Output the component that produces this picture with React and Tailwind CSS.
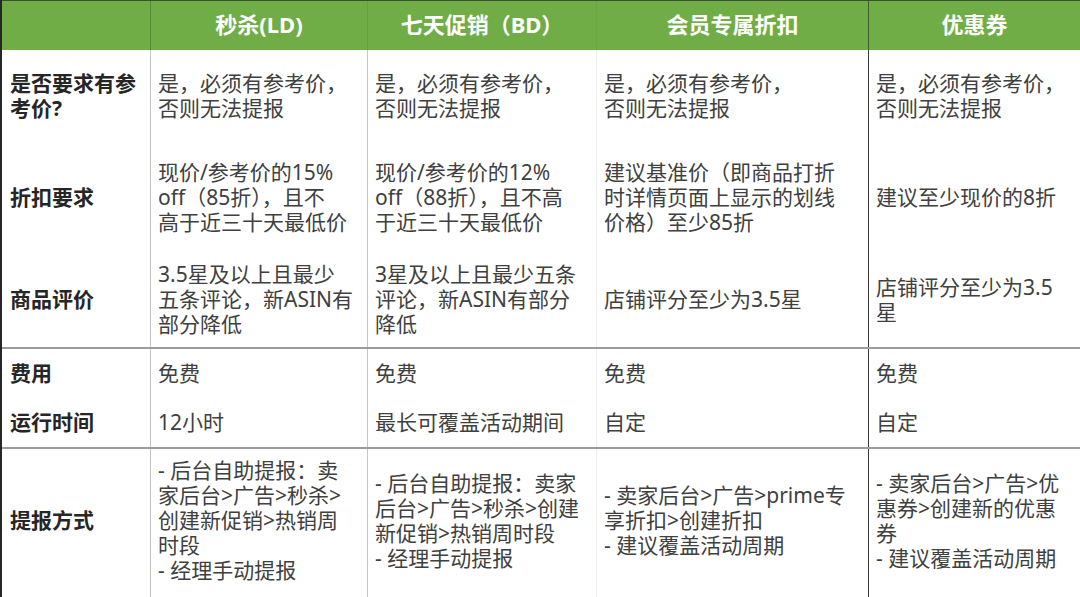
const FONT = "font-['Noto_Sans','Noto_Sans_CJK_SC',sans-serif]";

const headers = ["", "秒杀(LD)", "七天促销（BD）", "会员专属折扣", "优惠券"];

// each row: height, whether a grey rule sits on top, label lines, cell lines
const rows = [
  {
    h: "h-[92px]",
    label: ["是否要求有参", "考价?"],
    cells: [
      ["是，必须有参考价，", "否则无法提报"],
      ["是，必须有参考价，", "否则无法提报"],
      ["是，必须有参考价，", "否则无法提报"],
      ["是，必须有参考价，", "否则无法提报"],
    ],
  },
  {
    h: "h-[110px]",
    label: ["折扣要求"],
    cells: [
      ["现价/参考价的15%", "off（85折），且不", "高于近三十天最低价"],
      ["现价/参考价的12%", "off（88折），且不高", "于近三十天最低价"],
      ["建议基准价（即商品打折", "时详情页面上显示的划线", "价格）至少85折"],
      ["建议至少现价的8折"],
    ],
  },
  {
    h: "h-[95px]",
    label: ["商品评价"],
    cells: [
      ["3.5星及以上且最少", "五条评论，新ASIN有", "部分降低"],
      ["3星及以上且最少五条", "评论，新ASIN有部分", "降低"],
      ["店铺评分至少为3.5星"],
      ["店铺评分至少为3.5", "星"],
    ],
  },
  {
    h: "h-[50px]",
    rule: true,
    label: ["费用"],
    cells: [["免费"], ["免费"], ["免费"], ["免费"]],
  },
  {
    h: "h-[50px]",
    label: ["运行时间"],
    cells: [["12小时"], ["最长可覆盖活动期间"], ["自定"], ["自定"]],
  },
  {
    h: "h-[150px]",
    rule: true,
    last: true,
    label: ["提报方式"],
    cells: [
      ["- 后台自助提报：卖", "家后台>广告>秒杀>", "创建新促销>热销周", "时段", "- 经理手动提报"],
      ["- 后台自助提报：卖家", "后台>广告>秒杀>创建", "新促销>热销周时段", "- 经理手动提报"],
      ["- 卖家后台>广告>prime专", "享折扣>创建折扣", "- 建议覆盖活动周期"],
      ["- 卖家后台>广告>优", "惠券>创建新的优惠", "券", "- 建议覆盖活动周期"],
    ],
  },
];

const GRID = "grid grid-cols-[148px_217px_229px_272px_214px]";

// left rule of each body column
const bodyBorders = [
  "",
  "border-l border-[#c6c6c6]",
  "border-l border-[#c6c6c6]",
  "border-l border-[#efefef]",
  "border-l border-[#3a3a3a] border-r-2 border-r-[#262626]",
];

const headBorders = [
  "",
  "border-l border-[#55883a]",
  "border-l border-[#64a03f]",
  "border-l border-[#6aa744]",
  "border-l border-[#3f5f30] border-r-2 border-r-[#262626]",
];

function Lines({ lines }) {
  return (
    <div>
      {lines.map((l, i) => (
        <div key={i} className="whitespace-nowrap">
          {l}
        </div>
      ))}
    </div>
  );
}

export default function App() {
  return (
    <div className={`w-[1080px] h-[597px] overflow-hidden bg-white ${FONT}`}>
      <div className="border-l-2 border-[#262626]">
        {/* header */}
        <div className={`${GRID} h-[50px] bg-[#70ad47] border-t border-t-[#3d4f33]`}>
          {headers.map((t, i) => (
            <div
              key={i}
              className={`flex items-center justify-center pb-[2px] text-[22px] font-bold text-white ${headBorders[i]}`}
            >
              {t}
            </div>
          ))}
        </div>

        {/* body */}
        {rows.map((r, ri) => (
          <div
            key={ri}
            className={`${GRID} ${r.h} ${r.rule ? "border-t-2 border-[#9c9c9c]" : ""}`}
          >
            <div
              className={`flex items-center pl-[8px] text-[21px] leading-[25px] font-bold text-[#262626] ${r.last ? "pb-[5px]" : ""}`}
            >
              <Lines lines={r.label} />
            </div>
            {r.cells.map((c, ci) => (
              <div
                key={ci}
                className={`flex items-center pl-[7px] text-[21px] leading-[25px] text-[#404040] ${bodyBorders[ci + 1]} ${r.last ? "pb-[5px]" : ""}`}
              >
                <Lines lines={c} />
              </div>
            ))}
          </div>
        ))}
      </div>
    </div>
  );
}
